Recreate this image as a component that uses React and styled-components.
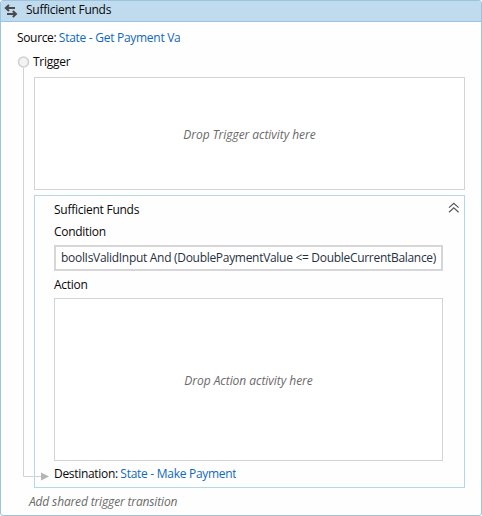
import React from "react";
import styled, { createGlobalStyle } from "styled-components";

const GlobalStyle = createGlobalStyle`
  * { box-sizing: border-box; }
  body { margin: 0; background: #fff; overflow: hidden; }
`;

const Card = styled.section`
  position: relative;
  width: 482px;
  height: 516px;
  border: 1px solid #9dc2dc;
  border-radius: 3px;
  background: #fefefe;
  font: 12px/16px "Open Sans", "Noto Sans", sans-serif;
  color: #080808;
  white-space: nowrap;
`;

const Header = styled.header`
  display: flex;
  align-items: center;
  gap: 8px;
  height: 21px;
  padding: 0 0 2px 3px;
  background: #c1dbee;
  border-bottom: 1px solid #9cc5e2;
`;

const Text = styled.span`
  display: block;
  letter-spacing: ${(p) => p.$track ?? -0.28}px;
`;

const Link = styled(Text)`
  color: #1069bd;
  width: ${(p) => (p.$width ? `${p.$width}px` : "auto")};
  overflow: hidden;
`;

const Hint = styled(Text)`
  font-style: italic;
  color: #6a6a6a;
`;

const Row = styled.div`
  display: flex;
  gap: 2.5px;
`;

const SourceRow = styled(Row)`
  padding: 8px 0 0 16px;
`;

const TriggerRow = styled(Row)`
  padding: 8px 0 0 32px;
`;

const DropZone = styled.div`
  display: flex;
  align-items: center;
  justify-content: center;
  height: ${(p) => p.$height}px;
  padding-top: ${(p) => p.$nudge || 0}px;
  border: 1px solid #d3d4d6;
  background: #fff;
`;

const Content = styled.div`
  display: flex;
  flex-direction: column;
  gap: 5px;
  margin: 7px 16px 0 33px;
`;

const Transition = styled.div`
  height: 293px;
  border: 1px solid #b3d9e6;
  padding: 6px 21px 0 19px;
`;

const TransitionHeader = styled.div`
  display: flex;
  justify-content: space-between;
  height: 22px;
  margin-right: -17px;
`;

const Field = styled.div`
  height: 26px;
  margin: 5px 0 6px;
  padding: 3px 0 0 5px;
  border: 2px solid #d6d6d9;
  background: #fff;
  color: #27303f;
`;

const ActionZone = styled(DropZone)`
  margin: 5px 0;
`;

const Footer = styled.footer`
  padding: 6px 0 0 28px;
`;

const Connector = styled.svg`
  position: absolute;
  left: 16px;
  top: 54px;
  pointer-events: none;
`;

const SwapIcon = () => (
  <svg width="14" height="15" viewBox="0 0 14 15" fill="none" stroke="#4a4a4c" strokeWidth="2">
    <path d="M11 5H2M5 2L1.8 5 5 8M3 11H12M8.8 8l3.2 3-3.2 3" />
  </svg>
);

const CollapseIcon = () => (
  <svg width="12" height="12" viewBox="0 0 12 12" fill="none" stroke="#55575e" strokeWidth="1.2">
    <path d="M1 5.6l4.8-4.4 4.8 4.4M1 10.2l4.8-4.4 4.8 4.4" />
  </svg>
);

export default function App() {
  return (
    <>
      <GlobalStyle />
      <Card>
        <Header>
          <SwapIcon />
          <Text $track={-0.26}>Sufficient Funds</Text>
        </Header>
        <SourceRow>
          <Text $track={-0.34}>Source:</Text>
          <Link $width={121}>State - Get Payment Va</Link>
        </SourceRow>
        <TriggerRow>
          <Text>Trigger</Text>
        </TriggerRow>
        <Content>
          <DropZone $height={113} $nudge={2}>
            <Hint $track={-0.05}>Drop Trigger activity here</Hint>
          </DropZone>
          <Transition>
            <TransitionHeader>
              <Text $track={-0.26}>Sufficient Funds</Text>
              <CollapseIcon />
            </TransitionHeader>
            <Text>Condition</Text>
            <Field>
              <Text $track={-0.3}>boolIsValidInput And (DoublePaymentValue &lt;= DoubleCurrentBalance)</Text>
            </Field>
            <Text>Action</Text>
            <ActionZone $height={163} $nudge={2}>
              <Hint $track={-0.04}>Drop Action activity here</Hint>
            </ActionZone>
            <Row>
              <Text $track={-0.31}>Destination:</Text>
              <Link>State - Make Payment</Link>
            </Row>
          </Transition>
        </Content>
        <Footer>
          <Hint $track={-0.15}>Add shared trigger transition</Hint>
        </Footer>
        <Connector width="34" height="428" viewBox="0 0 34 428">
          <path d="M6.5 13V421.5H26" fill="none" stroke="#d2d2d4" />
          <circle cx="6.5" cy="7" r="5" fill="#f3f3f3" stroke="#d0d0d2" strokeWidth="1.6" />
          <path d="M24 417.5l8 4-8 4z" fill="#b5b5b5" />
        </Connector>
      </Card>
    </>
  );
}
